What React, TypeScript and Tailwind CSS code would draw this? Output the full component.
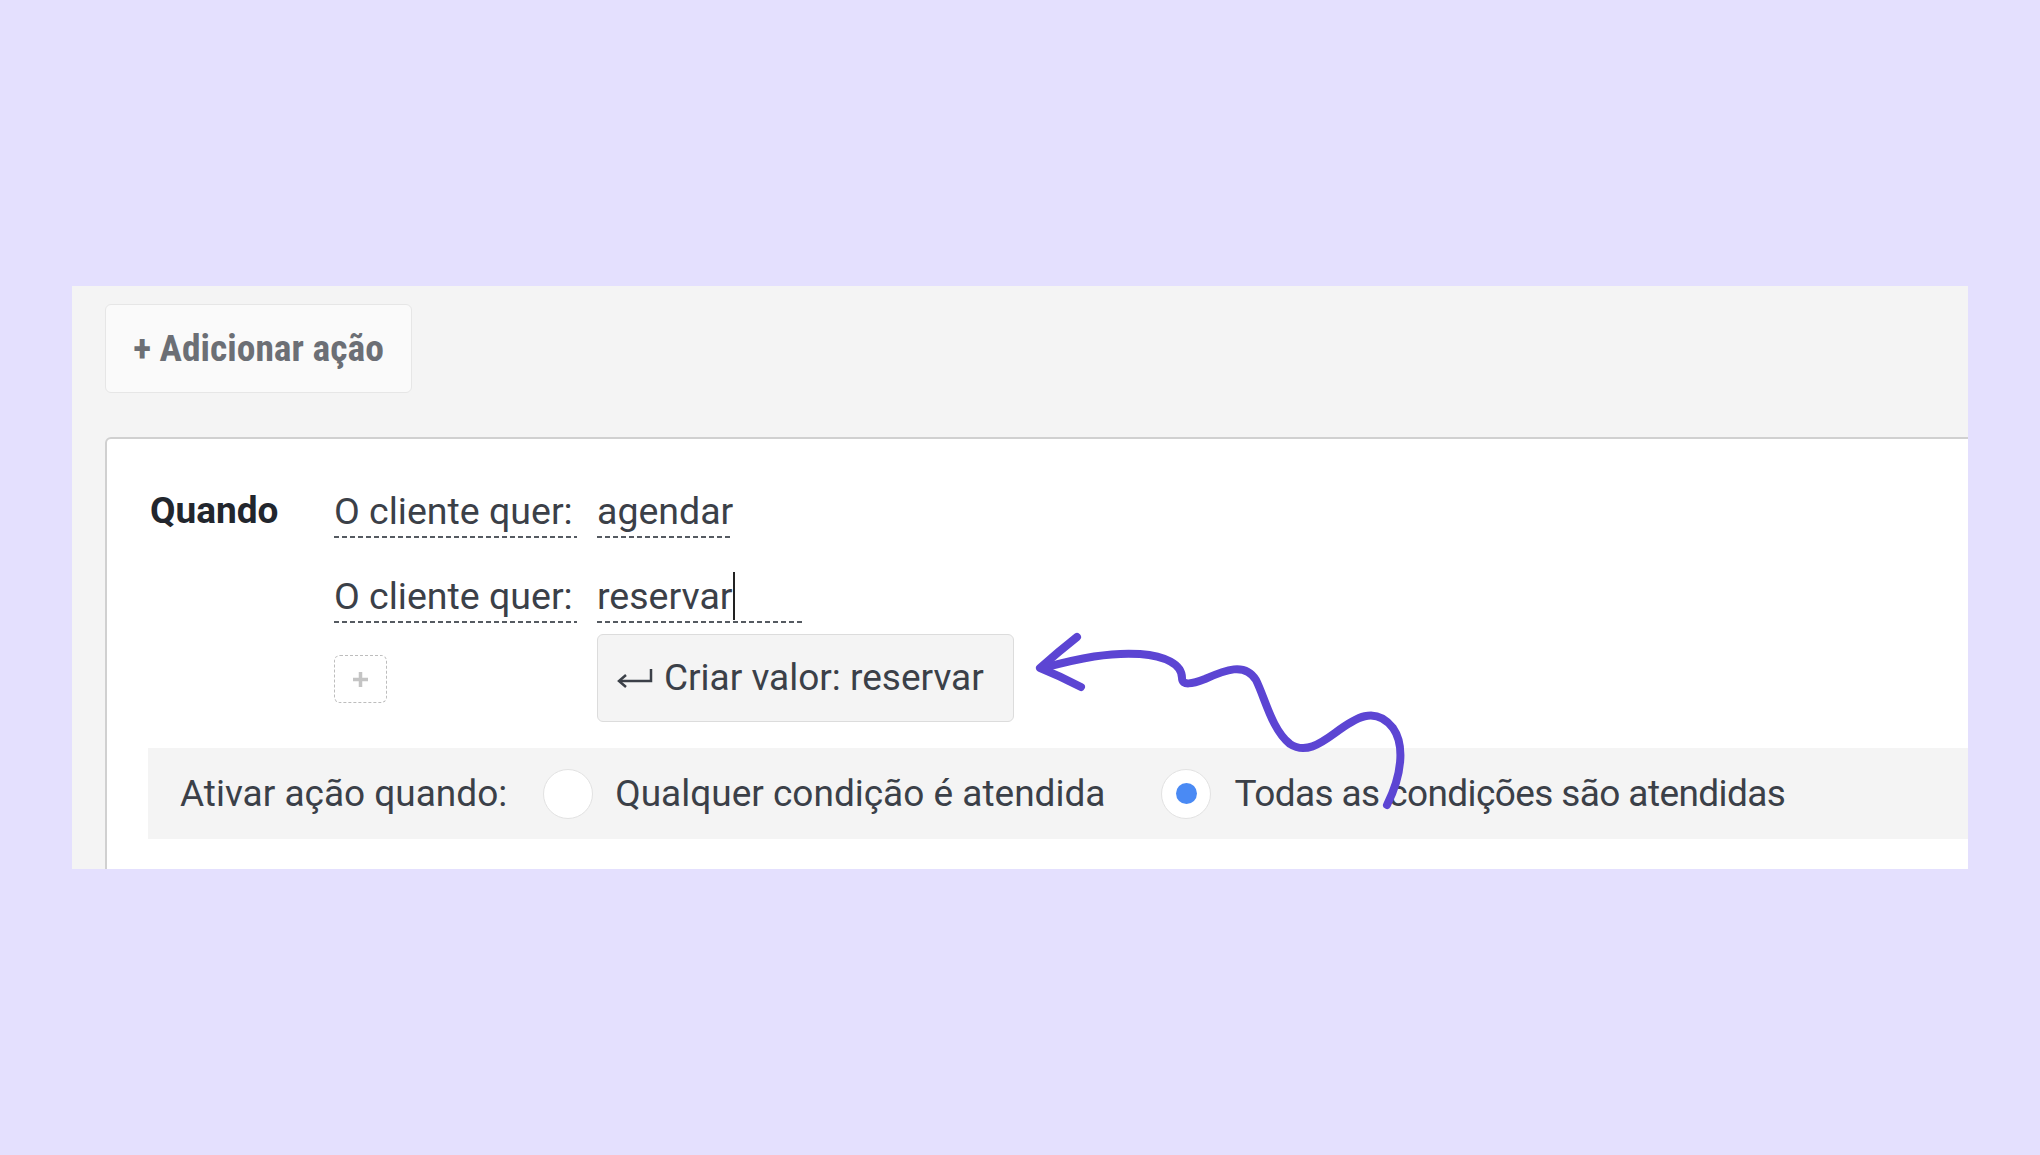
import React from "react";

function Field({ text, width, children }: { text?: string; width: number; children?: React.ReactNode }) {
  return (
    <div className="flex flex-col shrink-0" style={{ width }}>
      <div className="h-[44px] leading-[44px] text-[37.5px] text-[#3b4048] whitespace-nowrap flex items-center">
        {text}
        {children}
      </div>
      <div className="mt-[3px] h-[2px] w-full bg-[repeating-linear-gradient(to_right,#555a61_0_5px,transparent_5px_8px)]" />
    </div>
  );
}

function Radio({ checked }: { checked?: boolean }) {
  return (
    <div className="w-[50px] h-[50px] rounded-full bg-white border border-[#e2e2e2] flex items-center justify-center shrink-0">
      {checked && <div className="w-[21px] h-[21px] rounded-full bg-[#4a8af4]" />}
    </div>
  );
}

export default function App() {
  return (
    <div className="w-[2040px] h-[1155px] bg-[#e4e0fe] overflow-hidden relative font-['Roboto',sans-serif]">
      <div className="ml-[72px] mt-[286px] w-[1896px] h-[583px] bg-[#f4f4f4] overflow-hidden flex flex-col pl-[33px] pt-[18px]">
        <div className="w-[307px] h-[89px] shrink-0 bg-[#fafafa] border border-[#e6e6e6] rounded-[6px] flex items-center justify-center text-[37.5px] font-bold [font-stretch:75%] text-[#6c6f75]">
          + Adicionar ação
        </div>
        <div className="mt-[44px] w-[1900px] h-[600px] shrink-0 bg-white border-2 border-[#d0d0d0] rounded-tl-[6px] pl-[41px] pt-[50px]">
          <div className="flex pl-[2px]">
            <div className="w-[184px] shrink-0 h-[44px] leading-[44px] text-[37px] font-bold text-[#22262d]">Quando</div>
            <div className="flex flex-col">
              <div className="flex gap-[20px]">
                <Field text="O cliente quer:" width={243} />
                <Field text="agendar" width={133} />
              </div>
              <div className="flex gap-[20px] mt-[36px]">
                <Field text="O cliente quer:" width={243} />
                <Field width={206}>
                  <span>reservar</span>
                  <span className="inline-block w-[2px] h-[48px] bg-[#222]" />
                </Field>
              </div>
              <div className="relative mt-[32px] h-[48px]">
                <div className="w-[53px] h-[48px] border border-dashed border-[#bdbdbd] rounded-[6px] flex items-center justify-center">
                  <svg width="17" height="17" viewBox="0 0 17 17">
                    <path d="M8.5 1v15M1 8.5h15" stroke="#c4c4c4" strokeWidth="3.5" />
                  </svg>
                </div>
                <div className="absolute left-[263px] top-[-21px] w-[417px] h-[88px] bg-[#f4f4f4] border border-[#dcdcdc] rounded-[6px] flex items-center pl-[17px] text-[37px] text-[#3b4048] whitespace-nowrap">
                  <svg width="40" height="24" viewBox="0 0 40 24" className="shrink-0 mr-[9px]">
                    <path d="M36 3v12H5" fill="none" stroke="#3b4048" strokeWidth="2.5" />
                    <path d="M11 9l-7 6 7 6" fill="none" stroke="#3b4048" strokeWidth="2.5" />
                  </svg>
                  Criar valor: reservar
                </div>
              </div>
            </div>
          </div>
          <div className="mt-[45px] h-[91px] bg-[#f4f4f4] flex items-center pl-[32px] text-[37px] text-[#3b4048] whitespace-nowrap">
            <span>Ativar ação quando:</span>
            <div className="ml-[36px]"><Radio /></div>
            <span className="ml-[22px]">Qualquer condição é atendida</span>
            <div className="ml-[56px]"><Radio checked /></div>
            <span className="ml-[23px] tracking-[-0.6px]">Todas as condições são atendidas</span>
          </div>
        </div>
      </div>

      <svg className="absolute left-0 top-0 pointer-events-none" width="2040" height="1155" viewBox="0 0 2040 1155">
        <g fill="none" stroke="#5c45d3" strokeWidth="8" strokeLinecap="round" strokeLinejoin="round">
          <path d="M1043 668 C1080 658 1110 652 1140 654 C1165 656 1182 664 1182 678 C1182 686 1192 684 1205 679 C1225 670 1245 662 1256 680 C1265 698 1272 730 1290 744 C1305 754 1320 744 1335 733 C1355 718 1375 705 1393 728 C1405 745 1402 775 1387 805" />
          <path d="M1077 637 Q1058 652 1040 668 Q1060 676 1081 687" />
        </g>
      </svg>
    </div>
  );
}
